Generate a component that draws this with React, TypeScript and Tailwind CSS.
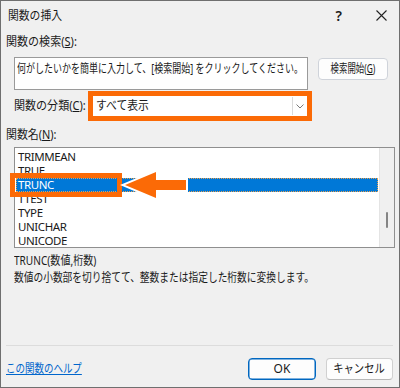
export default function App() {
  const items = ["TRIMMEAN", "TRUE", "TRUNC", "TTEST", "TYPE", "UNICHAR", "UNICODE"];
  return (
    <div className="relative flex h-[388px] w-[400px] flex-col overflow-hidden whitespace-nowrap border border-[#6f6f6f] bg-[#f0f0f0] font-['Noto_Sans','Noto_Sans_CJK_JP',sans-serif] text-[12px] leading-[16px] text-[#1a1a1a]">
      {/* title bar */}
      <div className="flex h-[29px] items-center pl-[7px]">
        <span className="inline-block origin-left [transform:scaleX(0.9)]">関数の挿入</span>
        <span className="ml-auto mr-[34px] text-[14px] font-semibold">?</span>
        <svg className="mr-[12px]" width="11" height="11" viewBox="0 0 11 11">
          <path d="M0.5 0.5 L10.5 10.5 M10.5 0.5 L0.5 10.5" stroke="#222" strokeWidth="1.1" />
        </svg>
      </div>

      {/* search label */}
      <div className="mt-[4px] pl-[5px]">
        <span className="inline-block origin-left [transform:scaleX(0.92)]">
          関数の検索(<span className="underline">S</span>):
        </span>
      </div>

      {/* search row */}
      <div className="mt-[7px] flex items-start pl-[13px]">
        <div className="h-[33px] w-[294px] overflow-hidden border border-[#9a9a9a] bg-white pl-[2px] pt-[3px]">
          <span className="inline-block origin-left [transform:scaleX(0.75)]">
            何がしたいかを簡単に入力して、[検索開始] をクリックしてください。
          </span>
        </div>
        <button className="ml-[10px] mt-[1px] flex h-[22px] w-[70px] items-center justify-center overflow-visible rounded-[4px] border border-[#cfd3da] bg-[#fdfdfd]">
          <span className="inline-block shrink-0 [transform:scaleX(0.7)]">
            検索開始(<span className="underline">G</span>)
          </span>
        </button>
      </div>

      {/* category row */}
      <div className="mt-[1px] flex items-center pl-[13px]">
        <span className="w-[74px] shrink-0">
          <span className="inline-block origin-left [transform:scaleX(0.92)]">
            関数の分類(<span className="underline">C</span>):
          </span>
        </span>
        <div className="flex h-[30px] w-[224px] border-[5px] border-[#fb6a06] bg-white">
          <span className="flex flex-1 items-center pl-[3px]">
            <span className="inline-block origin-left [transform:scaleX(0.9)]">すべて表示</span>
          </span>
          <div className="my-[1px] flex w-[15px] items-center justify-center border-l border-[#dadada]">
            <svg width="8" height="5" viewBox="0 0 8 5">
              <path d="M0.5 0.5 L4 4 L7.5 0.5" fill="none" stroke="#7a7a7a" strokeWidth="1" />
            </svg>
          </div>
        </div>
      </div>

      {/* function name label */}
      <div className="mt-[6px] pl-[5px]">
        <span className="inline-block origin-left [transform:scaleX(0.91)]">
          関数名(<span className="underline">N</span>):
        </span>
      </div>

      {/* list box */}
      <div className="ml-[13px] mt-[4px] flex h-[101px] w-[381px] border border-[#8f8f8f] bg-white">
        <div className="flex flex-1 flex-col pt-[2px] text-[11.5px] tracking-[-0.4px]">
          {items.map((it) => (
            <div
              key={it}
              className={
                it === "TRUNC"
                  ? "mx-[1px] h-[14px] bg-[#0078d7] pl-[2px] leading-[14px] text-white outline-1 outline-dotted outline-[#e8a050] -outline-offset-1"
                  : "mx-[1px] h-[14px] pl-[2px] leading-[14px]"
              }
            >
              {it}
            </div>
          ))}
        </div>
        <div className="relative w-[15px] border-l border-[#e4e4e4] bg-[#f0f0f0]">
          <div className="absolute left-[6px] top-[64px] h-[16px] w-[2px] rounded-full bg-[#858585]" />
        </div>
      </div>

      {/* description */}
      <div className="mt-[4px] pl-[13px] leading-[17px]">
        <span className="inline-block origin-left [transform:scaleX(0.84)]">TRUNC(数値,桁数)</span>
      </div>
      <div className="pl-[13px] leading-[17px]">
        <span className="inline-block origin-left [transform:scaleX(0.81)]">
          数値の小数部を切り捨てて、整数または指定した桁数に変換します。
        </span>
      </div>

      {/* footer */}
      <div className="mt-auto ml-[5px] mr-[6px] h-px bg-[#dcdcdc]" />
      <div className="mb-[7px] mt-[12px] flex items-center pl-[5px] pr-[6px]">
        <a className="inline-block origin-left [transform:scaleX(0.79)] text-[#0066cc] underline">この関数のヘルプ</a>
        <button className="ml-auto flex h-[22px] w-[68px] items-center justify-center rounded-[4px] border border-[#0067c0] bg-[#fdfdfd] shadow-[inset_0_0_0_0.5px_#0067c0]">
          OK
        </button>
        <button className="ml-[10px] flex h-[22px] w-[67px] items-center justify-center rounded-[4px] border border-[#d0d0d0] border-b-[#b8b8b8] bg-[#fdfdfd]">
          <span className="inline-block [transform:scaleX(0.86)]">キャンセル</span>
        </button>
      </div>

      {/* annotation: orange box around TRUNC */}
      <div className="absolute left-[9px] top-[172px] h-[24px] w-[112px] border-[5px] border-[#fb6a06]" />

      {/* annotation: arrow */}
      <svg className="absolute left-[119px] top-[167px]" width="72" height="34" viewBox="0 0 72 34">
        <polygon
          points="5,17 36,4 36,12 66,12 66,22 36,22 36,30"
          fill="none"
          stroke="#ffffff"
          strokeWidth="4"
          strokeLinejoin="miter"
        />
        <polygon points="5,17 36,4 36,12 66,12 66,22 36,22 36,30" fill="#fb6a06" />
      </svg>
    </div>
  );
}
